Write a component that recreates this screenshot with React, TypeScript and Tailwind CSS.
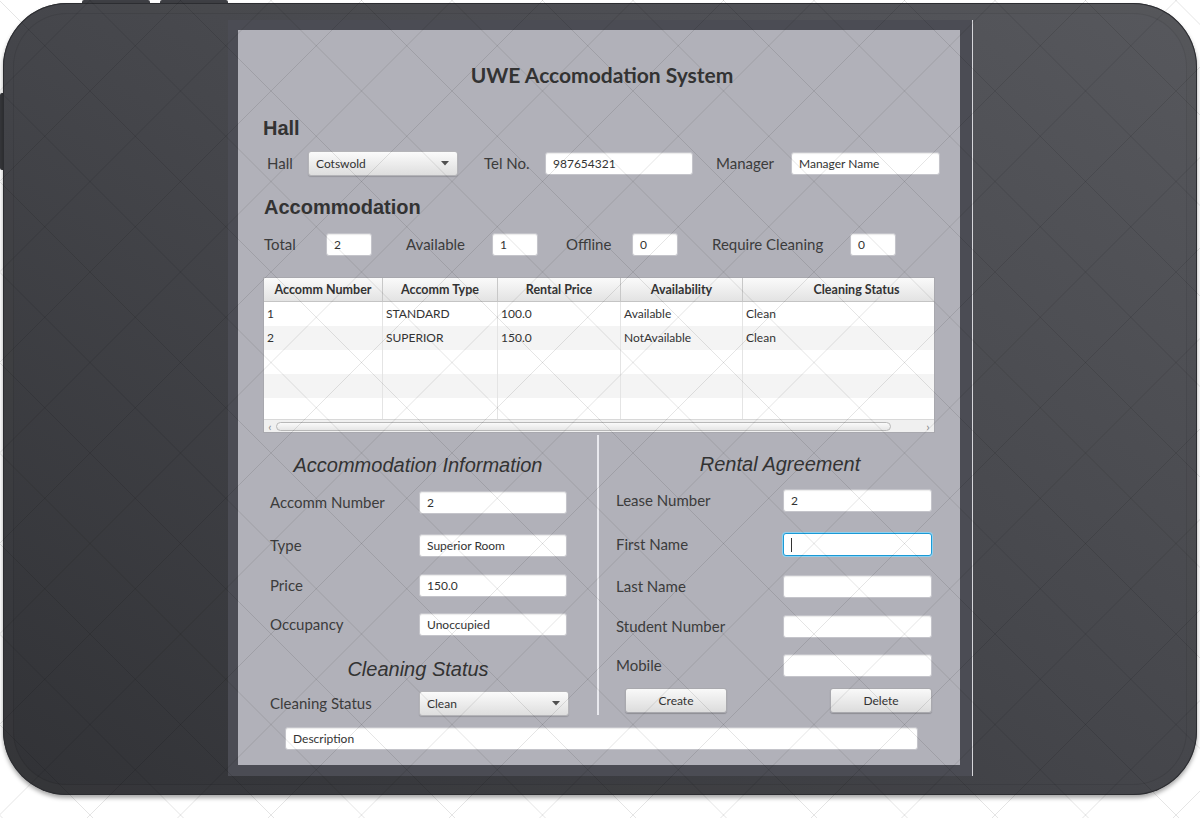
import React from "react";

const P = 90.5;

function Watermark() {
  const lines: React.ReactNode[] = [];
  const a = -182;
  const b = 362;
  for (let m = -20; m <= 20; m++) {
    const c = a + m * P;
    lines.push(
      <line key={"d" + m} x1={c - 50} y1={-50} x2={c + 900} y2={900} />
    );
  }
  for (let n = -5; n <= 30; n++) {
    const c = b + n * P;
    lines.push(
      <line key={"u" + n} x1={c + 50} y1={-50} x2={c - 900} y2={900} />
    );
  }
  return (
    <svg
      className="pointer-events-none absolute left-0 top-0"
      width={1200}
      height={818}
      viewBox="0 0 1200 818"
    >
      <g stroke="rgba(0,0,0,0.1)" strokeWidth={1} fill="none">
        {lines}
      </g>
    </svg>
  );
}

function Input({ w, value, focused }: { w: string; value?: string; focused?: boolean }) {
  if (focused) {
    return (
      <div
        className={`${w} h-[23px] shrink-0 rounded-[3px] border border-[#1a9ad6] bg-white shadow-[0_0_0_1px_#8fd0ef] flex items-center pl-[7px]`}
      >
        <div className="h-[14px] w-px bg-[#333]" />
      </div>
    );
  }
  return (
    <div
      className={`${w} h-[23px] shrink-0 rounded-[3px] border border-[#c4c4ca] bg-white shadow-[inset_0_1px_1px_rgba(0,0,0,0.08)] flex items-center pl-[7px] text-[12px] text-[#333] font-['Lato']`}
    >
      {value}
    </div>
  );
}

function Combo({ w, value }: { w: string; value: string }) {
  return (
    <div
      className={`${w} h-[25px] shrink-0 rounded-[3px] border border-[#b4b4b8] bg-[linear-gradient(#fbfbfb,#dedede)] shadow-[0_1px_1px_rgba(0,0,0,0.15)] flex items-center justify-between pl-[7px] pr-[8px] text-[12px] text-[#333] font-['Lato']`}
    >
      <span>{value}</span>
      <svg width="8" height="5" viewBox="0 0 8 5">
        <path d="M0 0 L8 0 L4 4.5 Z" fill="#505050" />
      </svg>
    </div>
  );
}

function Button({ label }: { label: string }) {
  return (
    <div className="w-[102px] h-[25px] rounded-[3px] border border-[#a9a9ae] bg-[linear-gradient(#f9f9f9,#dcdcdc)] shadow-[0_1px_1px_rgba(0,0,0,0.2)] flex items-center justify-center text-[12px] text-[#333] font-['Lato']">
      {label}
    </div>
  );
}

const headCells = [
  { w: "w-[119px]", t: "Accomm Number" },
  { w: "w-[115px]", t: "Accomm Type" },
  { w: "w-[123px]", t: "Rental Price" },
  { w: "w-[122px]", t: "Availability" },
  { w: "w-[228px]", t: "Cleaning Status" },
];

const rows = [
  ["1", "STANDARD", "100.0", "Available", "Clean"],
  ["2", "SUPERIOR", "150.0", "NotAvailable", "Clean"],
  ["", "", "", "", ""],
  ["", "", "", "", ""],
  ["", "", "", "", ""],
];

function Table() {
  return (
    <div className="ml-[25px] mt-[21px] w-[672px] h-[156px] bg-white border border-[#a8a8ae] overflow-hidden flex flex-col font-['Lato'] text-[#333]">
      <div className="flex h-[24px] shrink-0 bg-[linear-gradient(#fafafa,#e3e3e3)] border-b border-[#c4c4c4]">
        {headCells.map((c, i) => (
          <div
            key={i}
            className={`${c.w} shrink-0 border-r border-[#c8c8c8] text-center text-[12.5px] font-bold leading-[23px]`}
          >
            {c.t}
          </div>
        ))}
      </div>
      <div className="h-[117px] shrink-0 overflow-hidden">
        {rows.map((r, ri) => (
          <div
            key={ri}
            className={`flex h-[24px] ${ri % 2 === 1 ? "bg-[#f4f4f4]" : "bg-white"}`}
          >
            {r.map((v, ci) => (
              <div
                key={ci}
                className={`${headCells[ci].w} shrink-0 border-r border-[#e4e4e4] pl-[3px] text-[12px] leading-[23px]`}
              >
                {v}
              </div>
            ))}
          </div>
        ))}
      </div>
      <div className="h-[14px] shrink-0 bg-[#f0f0f0] border-t border-[#d8d8d8] flex items-center">
        <span className="w-[12px] text-center text-[12px] leading-none text-[#8a8a8a]">‹</span>
        <div className="w-[615px] h-[9px] rounded-full border border-[#b8b8b8] bg-[linear-gradient(#fafafa,#e6e6e6)]" />
        <div className="flex-1" />
        <span className="w-[12px] text-center text-[12px] leading-none text-[#8a8a8a]">›</span>
      </div>
    </div>
  );
}

function LRow({ label, children, h = "h-[23px]" }: { label: string; children: React.ReactNode; h?: string }) {
  return (
    <div className={`flex items-center ${h}`}>
      <div className="w-[149px] shrink-0 text-[15px] text-[#3c3c3c] font-['Lato']">{label}</div>
      {children}
    </div>
  );
}

function RRow({ label, children }: { label: string; children: React.ReactNode }) {
  return (
    <div className="flex items-center h-[23px]">
      <div className="w-[167px] shrink-0 text-[15px] text-[#3c3c3c] font-['Lato']">{label}</div>
      {children}
    </div>
  );
}

function AppPanel() {
  return (
    <div className="w-[722px] h-[735px] bg-[#b1b1b9] flex flex-col">
      <div className="pt-[32px] pl-[6px] h-[58px] text-center text-[21px] leading-[26px] font-bold text-[#333] font-['Lato']">
        UWE Accomodation System
      </div>
      <div className="mt-[28px] h-[24px] pl-[25px] text-[20px] leading-[24px] font-bold text-[#333] font-['Liberation_Sans']">
        Hall
      </div>
      <div className="mt-[11px] h-[25px] flex items-center pl-[29px] text-[15px] text-[#3c3c3c] font-['Lato']">
        <div className="w-[41px] shrink-0">Hall</div>
        <Combo w="w-[150px]" value="Cotswold" />
        <div className="ml-[26px] w-[61px] shrink-0">Tel No.</div>
        <Input w="w-[148px]" value="987654321" />
        <div className="ml-[23px] w-[75px] shrink-0">Manager</div>
        <Input w="w-[149px]" value="Manager Name" />
      </div>
      <div className="mt-[19px] h-[24px] pl-[26px] text-[20px] leading-[24px] font-bold text-[#333] font-['Liberation_Sans']">
        Accommodation
      </div>
      <div className="mt-[14px] h-[23px] flex items-center pl-[26px] text-[15px] text-[#3c3c3c] font-['Lato']">
        <div className="w-[62px] shrink-0">Total</div>
        <Input w="w-[46px]" value="2" />
        <div className="ml-[34px] w-[86px] shrink-0">Available</div>
        <Input w="w-[46px]" value="1" />
        <div className="ml-[28px] w-[66px] shrink-0">Offline</div>
        <Input w="w-[46px]" value="0" />
        <div className="ml-[34px] w-[138px] shrink-0">Require Cleaning</div>
        <Input w="w-[46px]" value="0" />
      </div>
      <Table />
      <div className="ml-[25px] h-[283px] flex">
        {/* left column */}
        <div className="w-[334px] shrink-0 flex flex-col">
          <div className="mt-[17px] h-[30px] pr-[24px] text-center text-[20px] leading-[30px] italic text-[#333] font-['Liberation_Sans']">
            Accommodation Information
          </div>
          <div className="pl-[7px] flex flex-col">
            <div className="mt-[11px]">
              <LRow label="Accomm Number">
                <Input w="w-[148px]" value="2" />
              </LRow>
            </div>
            <div className="mt-[20px]">
              <LRow label="Type">
                <Input w="w-[148px]" value="Superior Room" />
              </LRow>
            </div>
            <div className="mt-[17px]">
              <LRow label="Price">
                <Input w="w-[148px]" value="150.0" />
              </LRow>
            </div>
            <div className="mt-[16px]">
              <LRow label="Occupancy">
                <Input w="w-[148px]" value="Unoccupied" />
              </LRow>
            </div>
          </div>
          <div className="mt-[18px] h-[30px] pr-[24px] text-center text-[20px] leading-[30px] italic text-[#333] font-['Liberation_Sans']">
            Cleaning Status
          </div>
          <div className="mt-[7px] pl-[7px]">
            <LRow label="Cleaning Status" h="h-[25px]">
              <Combo w="w-[150px]" value="Clean" />
            </LRow>
          </div>
        </div>
        {/* divider */}
        <div className="mt-[2px] h-[280px] w-[2px] shrink-0 bg-[#e9e9ee]" />
        {/* right column */}
        <div className="w-[336px] shrink-0 flex flex-col pl-[17px]">
          <div className="mt-[16px] h-[30px] -ml-[17px] w-[336px] pl-[26px] text-center text-[20px] leading-[30px] italic text-[#333] font-['Liberation_Sans']">
            Rental Agreement
          </div>
          <div className="mt-[10px]">
            <RRow label="Lease Number">
              <Input w="w-[149px]" value="2" />
            </RRow>
          </div>
          <div className="mt-[21px]">
            <RRow label="First Name">
              <Input w="w-[149px]" focused />
            </RRow>
          </div>
          <div className="mt-[19px]">
            <RRow label="Last Name">
              <Input w="w-[149px]" />
            </RRow>
          </div>
          <div className="mt-[17px]">
            <RRow label="Student Number">
              <Input w="w-[149px]" />
            </RRow>
          </div>
          <div className="mt-[16px]">
            <RRow label="Mobile">
              <Input w="w-[149px]" />
            </RRow>
          </div>
          <div className="mt-[11px] -ml-[17px] pl-[26px] flex">
            <Button label="Create" />
            <div className="ml-[103px]">
              <Button label="Delete" />
            </div>
          </div>
        </div>
      </div>
      <div className="mt-[11px] ml-[47px]">
        <Input w="w-[633px]" value="Description" />
      </div>
    </div>
  );
}

export default function App() {
  return (
    <div className="relative w-[1200px] h-[818px] bg-white overflow-hidden">
      {/* side buttons */}
      <div className="absolute left-[82px] top-0 w-[68px] h-[5px] rounded-t-[2px] bg-[#3e3f44]" />
      <div className="absolute left-[160px] top-0 w-[68px] h-[5px] rounded-t-[2px] bg-[#3e3f44]" />
      <div className="absolute left-0 top-[93px] w-[5px] h-[77px] rounded-l-[2px] bg-[#36373b]" />
      <div className="ml-[3px] mt-[3px] w-[1194px] h-[792px] rounded-[64px] bg-[linear-gradient(to_bottom_left,#57585d,#45464b_50%,#313236)] shadow-[inset_0_0_0_1px_#2c2d31,inset_0_0_0_10px_rgba(255,255,255,0.035),inset_0_0_0_11px_rgba(0,0,0,0.08),0_3px_4px_rgba(0,0,0,0.35)] flex pl-[225px] pt-[17px] relative">
        <div className="w-[744px] h-[756px] bg-[#4b4c54] pl-[10px] pt-[10px]">
          <AppPanel />
        </div>
        <div className="w-px h-[756px] bg-[#d6d6da]" />
      </div>
      <Watermark />
    </div>
  );
}
